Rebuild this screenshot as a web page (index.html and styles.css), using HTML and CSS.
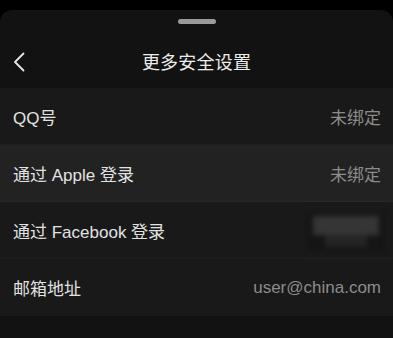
FILE: index.html
```html
<!DOCTYPE html>
<html lang="zh-CN">
<head>
<meta charset="utf-8">
<link rel="stylesheet" href="styles.css">
</head>
<body>
<div class="screen">
  <div class="sheet">
    <div class="grabber"></div>
    <div class="nav">
      <button class="back" aria-label="返回">
        <svg width="12" height="20" viewBox="0 0 12 20"><path d="M10.5 1.5 L2 10 L10.5 18.5" fill="none" stroke="#e6e6e6" stroke-width="1.8" stroke-linecap="round" stroke-linejoin="round"/></svg>
      </button>
      <div class="title">更多安全设置</div>
    </div>
    <div class="list">
      <div class="row"><span class="label">QQ号</span><span class="value">未绑定</span></div>
      <div class="row active"><span class="label">通过 Apple 登录</span><span class="value">未绑定</span></div>
      <div class="row"><span class="label">通过 Facebook 登录</span><span class="value blurred"><span class="blur-top"></span><span class="blur-bottom"></span></span></div>
      <div class="row last"><span class="label">邮箱地址</span><span class="value">user@china.com</span></div>
    </div>
  </div>
</div>
</body>
</html>
```

FILE: styles.css
```css
* { box-sizing: border-box; }
html, body { margin: 0; padding: 0; background: #000; }
body {
  width: 393px;
  height: 338px;
  overflow: hidden;
  font-family: "Liberation Sans", "Noto Sans CJK SC", sans-serif;
}
.screen {
  padding-top: 10px;
  height: 338px;
  background: #000;
}
.sheet {
  height: 328px;
  background: #121212;
  border-radius: 12px 12px 0 0;
  padding-top: 9px;
}
.grabber {
  width: 38px;
  height: 5px;
  border-radius: 3px;
  background: #9a9a9c;
  margin: 0 auto;
}
.nav {
  position: relative;
  height: 64px;
  padding-top: 10px;
  display: flex;
  align-items: center;
  justify-content: center;
}
.back {
  position: absolute;
  left: 13px;
  top: 28px;
  background: none;
  border: 0;
  padding: 0;
  width: 12px;
  height: 20px;
  display: block;
}
.back svg { display: block; }
.title {
  color: #ececec;
  font-size: 18px;
  font-family: "Noto Sans CJK SC", sans-serif;
  letter-spacing: 0.2px;
}
.list { background: #181818; }
.row {
  height: 57px;
  display: flex;
  align-items: center;
  justify-content: space-between;
  padding: 0 12px 0 13px;
  background: #191919;
  border-bottom: 1px solid #1f1f1f;
  font-size: 17px;
}
.row.active { background: #222222; border-bottom-color: #262626; }
.row.last { border-bottom: 0; }
.label { color: #e2e2e2; }
.value { color: #8c8c8c; }
.blurred {
  width: 78px;
  height: 38px;
  display: flex;
  flex-direction: column;
  align-items: center;
  filter: blur(2.5px);
  margin-top: 4px;
  margin-right: -4px;
  background: #151515;
  padding-top: 3px;
}
.blur-top { width: 66px; height: 19px; background: #353535; }
.blur-bottom { width: 42px; height: 12px; background: #242424; }
```
